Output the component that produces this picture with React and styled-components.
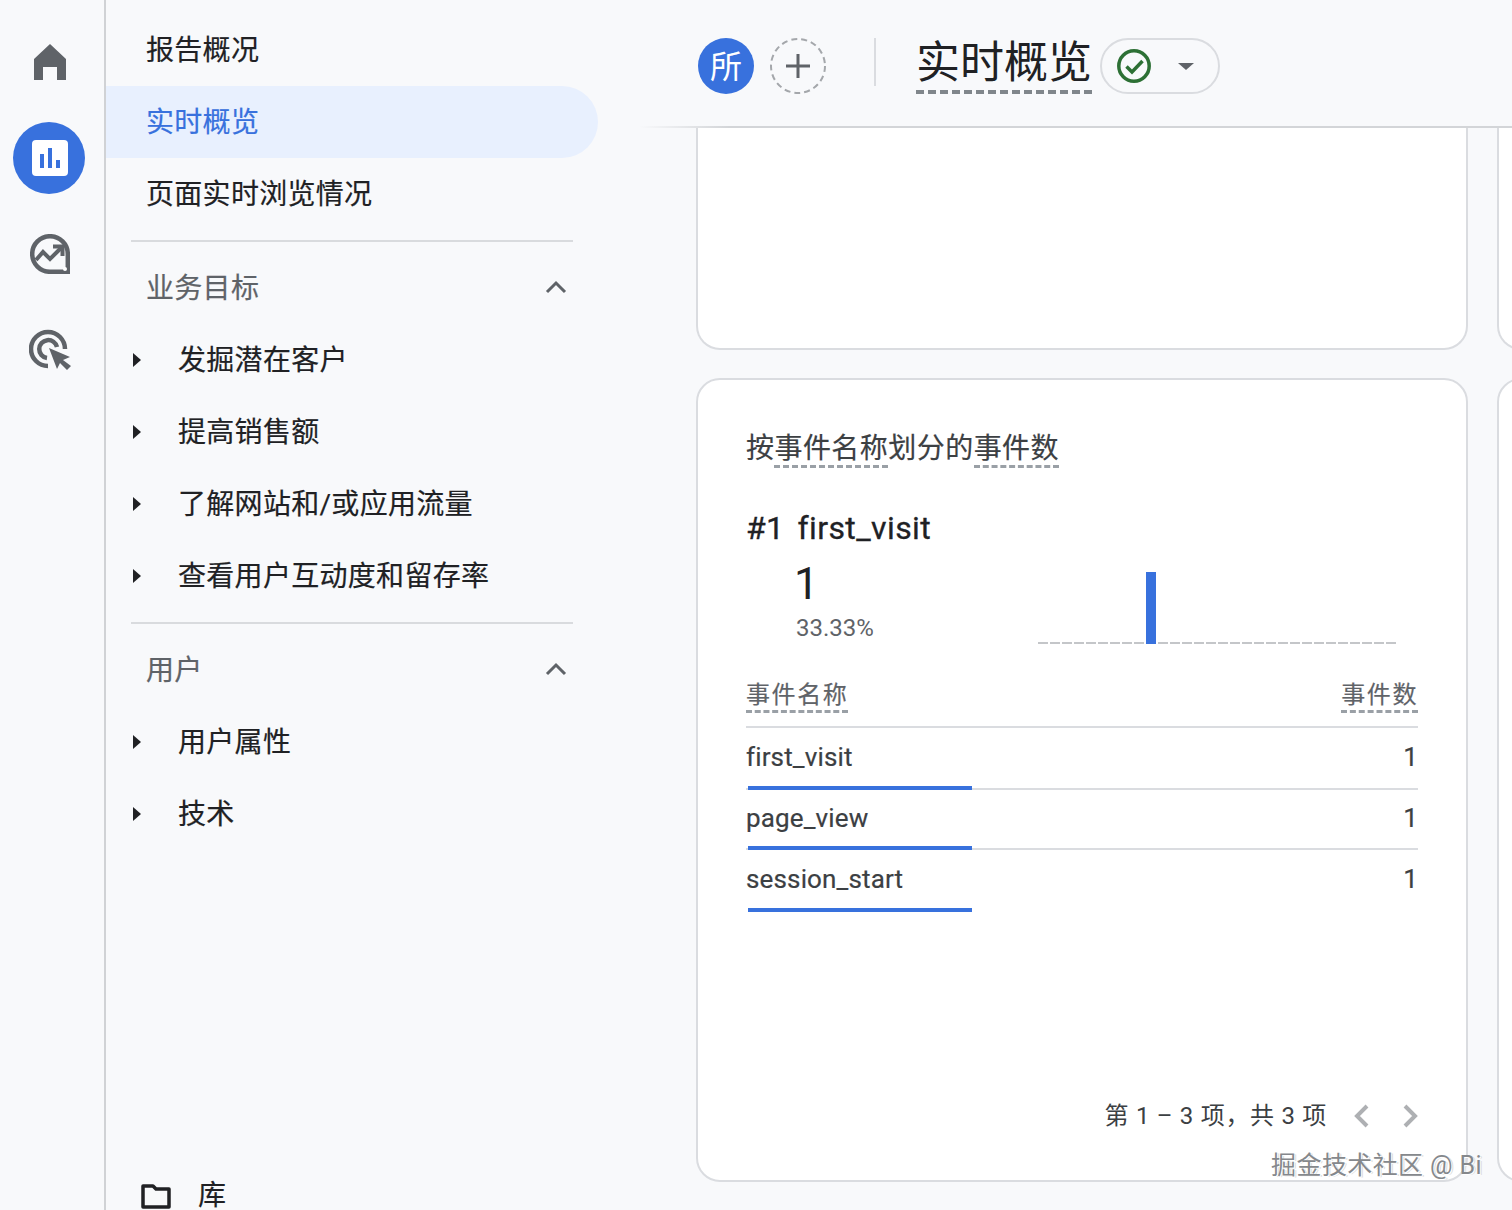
import React from "react";
import styled, { createGlobalStyle } from "styled-components";

const FONT = `Roboto, "Noto Sans CJK SC", sans-serif`;

const GlobalStyle = createGlobalStyle`
  html, body {
    margin: 0;
    padding: 0;
    background: #f8f9fb;
    font-family: ${FONT};
    color: #202124;
  }
  * {
    box-sizing: border-box;
  }
`;

const Page = styled.div`
  width: 1512px;
  height: 1210px;
  display: flex;
  overflow: hidden;
  position: relative;
`;

const Rail = styled.aside`
  flex: 0 0 106px;
  height: 100%;
  border-right: 2px solid #d0d2d5;
  display: flex;
  flex-direction: column;
  align-items: center;
  padding-top: 14px;
  padding-right: 6px;
`;

const RailSlot = styled.div`
  width: 72px;
  height: 96px;
  padding-left: ${(p) => (p.$active ? "0" : "2px")};
  display: flex;
  align-items: center;
  justify-content: center;
`;

const RailActive = styled.div`
  width: 72px;
  height: 72px;
  padding-left: 2px;
  border-radius: 50%;
  background: #3871dd;
  display: flex;
  align-items: center;
  justify-content: center;
`;

const Nav = styled.nav`
  flex: 0 0 494px;
  height: 100%;
  display: flex;
  flex-direction: column;
  padding-top: 14px;
`;

const NavItem = styled.div`
  width: 492px;
  height: 72px;
  flex: none;
  display: flex;
  align-items: center;
  padding-left: ${(p) => (p.$sub ? "27px" : "40px")};
  padding-bottom: 4px;
  font-size: 28px;
  letter-spacing: 0.3px;
  -webkit-text-stroke: 0.2px currentColor;
  color: ${(p) => (p.$active ? "#3871dd" : "#202124")};
  background: ${(p) => (p.$active ? "#e8f0fe" : "transparent")};
  border-radius: ${(p) => (p.$active ? "0 36px 36px 0" : "0")};
`;

const Caret = styled.span`
  width: 0;
  height: 0;
  margin: 4px 37px 0 0;
  border-left: 8px solid #202124;
  border-top: 7px solid transparent;
  border-bottom: 7px solid transparent;
`;

const NavDivider = styled.div`
  flex: none;
  width: 442px;
  height: 2px;
  margin: 10px 0 10px 25px;
  background: #d9dbde;
`;

const SectionHead = styled.div`
  width: 492px;
  height: 72px;
  flex: none;
  display: flex;
  align-items: center;
  justify-content: space-between;
  padding: 0 30px 4px 40px;
  font-size: 28px;
  letter-spacing: 0.3px;
  color: #5f6368;
  -webkit-text-stroke: 0.2px currentColor;
`;

const SectionChevron = styled.span`
  display: flex;
  margin-top: 2px;
`;

const LibraryRow = styled.div`
  flex: none;
  height: 28px;
  margin-top: auto;
  display: flex;
  align-items: center;
  gap: 27px;
  padding-left: 35px;
  font-size: 28px;
  line-height: 28px;
  -webkit-text-stroke: 0.2px currentColor;
`;

const Main = styled.main`
  flex: 1;
  min-width: 0;
  height: 100%;
  display: flex;
  flex-direction: column;
`;

const Header = styled.header`
  flex: none;
  height: 128px;
  display: flex;
  align-items: flex-start;
  padding: 38px 0 0 98px;
  border-bottom: 2px solid;
  border-image: linear-gradient(90deg, transparent 40px, #d3d5d8 130px) 1;
`;

const Avatar = styled.div`
  width: 56px;
  height: 56px;
  padding-bottom: 4px;
  border-radius: 50%;
  background: #3871dd;
  color: #fff;
  font-size: 32px;
  display: flex;
  align-items: center;
  justify-content: center;
`;

const AddButton = styled.div`
  width: 56px;
  height: 56px;
  margin-left: 16px;
  display: flex;
`;

const HeaderRule = styled.div`
  width: 2px;
  height: 48px;
  margin: 0 40px 0 48px;
  background: #dadce0;
`;

const PageTitle = styled.h1`
  margin: 0;
  height: 56px;
  font-size: 44px;
  line-height: 50px;
  font-weight: 400;
  border-bottom: 4px dashed #80868b;
`;

const StatusPill = styled.div`
  width: 120px;
  height: 56px;
  margin-left: 8px;
  border: 2px solid #dadce0;
  border-radius: 28px;
  display: flex;
  align-items: center;
  padding-left: 15px;
  gap: 27px;
`;

const PillCaret = styled.span`
  width: 0;
  height: 0;
  border-top: 7px solid #5f6368;
  border-left: 8px solid transparent;
  border-right: 8px solid transparent;
`;

const Cards = styled.div`
  flex: 1;
  min-height: 0;
  display: grid;
  grid-template-columns: 772px 772px;
  grid-template-rows: 222px 804px;
  column-gap: 29px;
  row-gap: 28px;
  padding-left: 96px;
  overflow: hidden;
`;

const Card = styled.section`
  background: #fff;
  border: 2px solid #dadce0;
  border-top: ${(p) => (p.$cut ? "none" : "2px solid #dadce0")};
  border-radius: ${(p) => (p.$cut ? "0 0 24px 24px" : "24px")};
  display: flex;
  flex-direction: column;
`;

const ChartCard = styled(Card)`
  padding: 0 48px;
`;

const CardTitle = styled.h2`
  margin: 49px 0 0;
  font-size: 28px;
  line-height: 40px;
  font-weight: 400;
  color: #3c4043;
  letter-spacing: 0.45px;
  -webkit-text-stroke: 0.2px currentColor;
`;

const Dashed = styled.span`
  border-bottom: 3px dashed #9aa0a6;
`;

const TopRow = styled.div`
  margin-top: 39px;
  font-size: 32px;
  line-height: 40px;
  font-weight: 400;
  letter-spacing: 0.4px;
  display: flex;
  gap: 13px;
  color: #202124;
  -webkit-text-stroke: 0.3px #202124;
`;

const Summary = styled.div`
  display: flex;
  height: 96px;
  margin-top: 10px;
  justify-content: space-between;
`;

const SummaryText = styled.div`
  padding-left: 48px;
`;

const BigValue = styled.div`
  font-size: 44px;
  line-height: 55px;
  margin-top: -1px;
`;

const Percent = styled.div`
  font-size: 24px;
  line-height: 32px;
  margin-left: 2px;
  color: #5f6368;
`;

const Spark = styled.div`
  width: 358px;
  height: 72px;
  margin: 14px 22px 0 0;
  display: flex;
  align-items: flex-end;
  background: repeating-linear-gradient(90deg, #c4c6c9 0 10px, transparent 10px 12px) left 70px / 100% 2px no-repeat;
`;

const SparkBar = styled.div`
  width: 10px;
  height: 72px;
  margin-left: 108px;
  background: #3871dd;
`;

const TableHead = styled.div`
  margin-top: 26px;
  height: 48px;
  display: flex;
  justify-content: space-between;
  align-items: flex-start;
  border-bottom: 2px solid #dadce0;
  font-size: 24px;
  color: #5f6368;
  letter-spacing: 1.6px;
  -webkit-text-stroke: 0.2px currentColor;
`;

const HeadLabel = styled.span`
  line-height: 30px;
  border-bottom: 3px dashed #9aa0a6;
`;

const Row = styled.div`
  position: relative;
  height: ${(p) => p.$h}px;
  display: flex;
  justify-content: space-between;
  padding-top: ${(p) => p.$top}px;
  font-size: 26px;
  line-height: 34px;
  letter-spacing: 0.15px;
  color: #3c4043;
  -webkit-text-stroke: 0.2px currentColor;
  border-bottom: ${(p) => (p.$last ? "none" : "2px solid #dadce0")};
`;

const RowBar = styled.div`
  position: absolute;
  left: 2px;
  bottom: -2px;
  width: 224px;
  height: 4px;
  background: #3871dd;
`;

const Pager = styled.div`
  margin-top: auto;
  margin-bottom: 48px;
  display: flex;
  justify-content: flex-end;
  align-items: center;
  font-size: 24px;
  line-height: 32px;
  color: #3c4043;
  letter-spacing: 0.7px;
`;

const PagerArrows = styled.div`
  display: flex;
  gap: 24px;
  margin-left: 23px;
  margin-right: -4px;
`;

const Watermark = styled.div`
  position: absolute;
  right: 30px;
  bottom: 28px;
  font-size: 25px;
  line-height: 32px;
  color: #85888c;
  text-shadow: 1px 1px 0 #fff, 2px 1px 0 #dcdcdc;
  letter-spacing: 0.4px;
`;

const HomeIcon = () => (
  <svg width="32" height="36" viewBox="0 0 32 36">
    <path fill="#5f6368" d="M16 0 32 15V36H23V23H9V36H0V15Z" />
  </svg>
);

const ReportsIcon = () => (
  <svg width="36" height="36" viewBox="0 0 36 36">
    <rect width="36" height="36" rx="4" fill="#fff" />
    <path fill="#3871dd" d="M8 14h4v14H8zM16 8h4v20h-4zM24 20h4v8h-4z" />
  </svg>
);

const ExploreIcon = () => (
  <svg width="40" height="40" viewBox="0 0 40 40" fill="none">
    <path stroke="#5f6368" strokeWidth="4.500" d="M20 2.200A17.800 17.800 0 0 1 37.800 20V37.800H20A17.800 17.800 0 0 1 20 2.200Z" />
    <path stroke="#5f6368" strokeWidth="4" d="M6 26l7-8 7 7 11-11" />
    <path stroke="#5f6368" strokeWidth="4" d="M23 12.500h9.500V22" />
    <circle cx="35" cy="35" r="2" fill="#fff" />
  </svg>
);

const AdsIcon = () => (
  <svg width="42" height="42" viewBox="0 0 42 42" fill="none">
    <path stroke="#5f6368" strokeWidth="4.500" d="M36 20A17 17 0 1 0 19 37" />
    <path stroke="#5f6368" strokeWidth="4.500" d="M28 18A9 9 0 1 0 18 29" />
    <path fill="#5f6368" d="M20 19 41 28 34 31 42 37 38 41 31 34 28 40Z" />
  </svg>
);

const ChevronUp = () => (
  <svg width="24" height="14" viewBox="0 0 24 14" fill="none">
    <path stroke="#5f6368" strokeWidth="3" d="M3 12 12 3l9 9" />
  </svg>
);

const FolderIcon = () => (
  <svg width="30" height="25" viewBox="0 0 30 25" fill="none">
    <path stroke="#202124" strokeWidth="3.500" strokeLinejoin="round" d="M2 2h10l3 3h13v18H2Z" />
  </svg>
);

const PlusCircle = () => (
  <svg width="56" height="56" viewBox="0 0 56 56" fill="none">
    <circle cx="28" cy="28" r="27" stroke="#a4a7ab" strokeWidth="2" strokeDasharray="6 4" />
    <path stroke="#5f6368" strokeWidth="3" d="M28 16v24M16 28h24" />
  </svg>
);

const CheckCircle = () => (
  <svg width="34" height="34" viewBox="0 0 34 34" fill="none">
    <circle cx="17" cy="17" r="15.200" stroke="#2d7035" strokeWidth="3.500" />
    <path stroke="#2d7035" strokeWidth="3.500" d="M9.500 17.500l5.500 5.500 10.500-11" />
  </svg>
);

const Chevron = ({ dir }) => (
  <svg width="24" height="26" viewBox="0 0 24 26" fill="none">
    <path stroke="#aeb0b3" strokeWidth="4" d={dir === "left" ? "M17 3 7 13l10 10" : "M7 3l10 10L7 23"} />
  </svg>
);

const goals = ["发掘潜在客户", "提高销售额", "了解网站和/或应用流量", "查看用户互动度和留存率"];
const userItems = ["用户属性", "技术"];
const rows = [
  { name: "first_visit", h: 62, top: 12 },
  { name: "page_view", h: 60, top: 11 },
  { name: "session_start", h: 60, top: 12, last: true },
];

const SubItem = ({ label }) => (
  <NavItem $sub>
    <Caret />
    {label}
  </NavItem>
);

export default function App() {
  return (
    <Page>
      <GlobalStyle />
      <Rail>
        <RailSlot><HomeIcon /></RailSlot>
        <RailSlot $active><RailActive><ReportsIcon /></RailActive></RailSlot>
        <RailSlot><ExploreIcon /></RailSlot>
        <RailSlot><AdsIcon /></RailSlot>
      </Rail>
      <Nav>
        <NavItem>报告概况</NavItem>
        <NavItem $active>实时概览</NavItem>
        <NavItem>页面实时浏览情况</NavItem>
        <NavDivider />
        <SectionHead>业务目标<SectionChevron><ChevronUp /></SectionChevron></SectionHead>
        {goals.map((g) => <SubItem key={g} label={g} />)}
        <NavDivider />
        <SectionHead>用户<SectionChevron><ChevronUp /></SectionChevron></SectionHead>
        {userItems.map((g) => <SubItem key={g} label={g} />)}
        <LibraryRow><FolderIcon />库</LibraryRow>
      </Nav>
      <Main>
        <Header>
          <Avatar>所</Avatar>
          <AddButton><PlusCircle /></AddButton>
          <HeaderRule />
          <PageTitle>实时概览</PageTitle>
          <StatusPill><CheckCircle /><PillCaret /></StatusPill>
        </Header>
        <Cards>
          <Card $cut />
          <Card $cut />
          <ChartCard>
            <CardTitle>按<Dashed>事件名称</Dashed>划分的<Dashed>事件数</Dashed></CardTitle>
            <TopRow><span>#1</span><span>first_visit</span></TopRow>
            <Summary>
              <SummaryText>
                <BigValue>1</BigValue>
                <Percent>33.33%</Percent>
              </SummaryText>
              <Spark><SparkBar /></Spark>
            </Summary>
            <TableHead>
              <HeadLabel>事件名称</HeadLabel>
              <HeadLabel>事件数</HeadLabel>
            </TableHead>
            {rows.map((r) => (
              <Row key={r.name} $h={r.h} $top={r.top} $last={r.last}>
                <span>{r.name}</span>
                <span>1</span>
                <RowBar />
              </Row>
            ))}
            <Pager>
              第 1 – 3 项，共 3 项
              <PagerArrows>
                <Chevron dir="left" />
                <Chevron dir="right" />
              </PagerArrows>
            </Pager>
          </ChartCard>
          <Card />
        </Cards>
      </Main>
      <Watermark>掘金技术社区 @ Bi</Watermark>
    </Page>
  );
}
